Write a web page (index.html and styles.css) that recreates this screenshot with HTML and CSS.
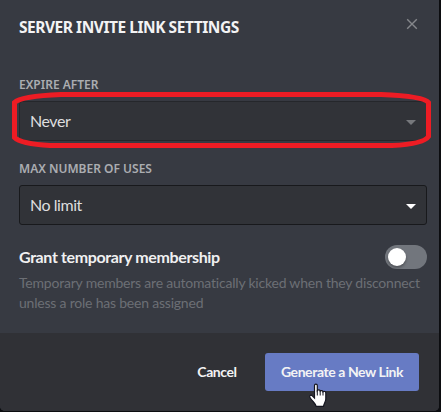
FILE: index.html
```html
<!DOCTYPE html>
<html lang="en">
<head>
    <meta charset="UTF-8">
    <meta name="viewport" content="width=device-width, initial-scale=1.0">
    <title>Server Invite Link Settings</title>
    <link rel="stylesheet" href="styles.css">
</head>
<body>
    <div class="modal">
        <div class="modal-header">
            <h2>Server Invite Link Settings</h2>
            <button class="close" type="button" aria-label="Close">
                <svg width="12" height="12" viewBox="0 0 12 12"><path d="M1.2 1.2 10.8 10.8M10.8 1.2 1.2 10.8"/></svg>
            </button>
        </div>

        <div class="modal-body">
            <div class="field">
                <h5>Expire After</h5>
                <div class="select focused">
                    <span>Never</span>
                    <svg class="arrow" width="10" height="5" viewBox="0 0 10 5"><path d="M0 0h10L5 5z"/></svg>

                    <!-- red marker around the field -->
                    <svg class="marker" width="421" height="58" viewBox="0 0 421 58">
                        <path d="M50 3.5H370C394 4.5 414 7 417.500 11.500V45.500C414 51 402 53.500 381 54.500H39C22 53.500 8 51 3.500 46.500V11.500C8 7 26 4.500 50 3.500Z"/>
                    </svg>
                </div>
            </div>

            <div class="field">
                <h5>Max Number of Uses</h5>
                <div class="select">
                    <span>No limit</span>
                    <svg class="arrow" width="10" height="5" viewBox="0 0 10 5"><path d="M0 0h10L5 5z"/></svg>
                </div>
            </div>

            <div class="switch-row">
                <h3>Grant temporary membership</h3>
                <div class="switch"></div>
            </div>
            <p class="note">Temporary members are automatically kicked when they disconnect<br>unless a role has been assigned</p>
        </div>

        <div class="modal-footer">
            <button class="cancel" type="button">Cancel</button>
            <button class="generate" type="button">Generate a New Link</button>
        </div>
    </div>

    <!-- hand pointer over the button -->
    <svg class="pointer" width="20" height="25" viewBox="0 0 20 25">
        <path d="M6.500 2.500C6.500 .7 9.300 .7 9.300 2.500V7.500C10 6.400 12 6.700 12.200 8C13 7.200 14.800 7.500 15 8.800C16 8 17.800 8.500 17.800 10V16C17.800 19 16 20 15.500 23.300H8.200C7.500 20.500 4.500 18.500 2 14.500C.8 12.500 3 11.500 4.300 12.800L6.500 15Z"/>
        <path class="fingers" d="M9.300 7v5.500M12.200 8v4.500M15 8.800v3.700"/>
    </svg>
</body>
</html>
```

FILE: styles.css
```css
* {
    box-sizing: border-box;
}

body {
    margin: 0;
    height: 412px;
    overflow: hidden;
    background-color: #0c0d10;
    font-family: Lato, 'Noto Sans', sans-serif;
}

h2, h3, h5, p {
    margin: 0;
}

button {
    border: none;
    padding: 0;
    background: none;
    font-family: inherit;
    cursor: pointer;
}

.modal {
    display: flex;
    flex-direction: column;
    width: 439px;
    height: 411px;
    border-radius: 0 0 5px 5px;
    overflow: hidden;
    background-color: #373a42;
}

.modal-header {
    display: flex;
    justify-content: space-between;
    align-items: flex-start;
    height: 75px;
    padding: 17px 21px 0 19px;
}

.modal-header h2 {
    color: #f3f3f4;
    font-family: 'Noto Sans', sans-serif;
    font-size: 15.5px;
    line-height: 20px;
    font-weight: 700;
    letter-spacing: -0.46px;
    text-transform: uppercase;
    white-space: nowrap;
}

.close {
    display: flex;
    margin-top: 1px;
}

.close svg {
    stroke: #85878b;
    stroke-width: 1.4;
    fill: none;
}

.modal-body {
    height: 258px;
    padding: 2px 12px 0 19px;
}

.field {
    width: 408px;
    height: 84px;
}

.field h5 {
    height: 24px;
    color: #abadb1;
    font-family: 'Noto Sans', sans-serif;
    font-size: 12px;
    line-height: 16px;
    font-weight: 600;
    text-transform: uppercase;
    white-space: nowrap;
}

.select {
    position: relative;
    display: flex;
    justify-content: space-between;
    align-items: center;
    height: 40px;
    padding: 0 10px;
    border: 1px solid #18191c;
    border-radius: 3px;
    background-color: #313338;
    color: #dededf;
    font-size: 16px;
    line-height: 20px;
    letter-spacing: -0.45px;
}

.select.focused {
    border-color: #25272b;
}

.arrow {
    fill: #fff;
    margin-top: 2px;
}

.focused .arrow {
    fill: #76787c;
}

.marker {
    position: absolute;
    left: -9px;
    top: -11px;
    fill: none;
    stroke: #ed1c24;
    stroke-width: 5;
}

.switch-row {
    display: flex;
    justify-content: space-between;
    width: 408px;
    height: 28px;
}

.switch-row h3 {
    color: #f0f0f1;
    font-size: 16px;
    line-height: 24px;
    font-weight: 700;
    letter-spacing: -0.37px;
    white-space: nowrap;
}

.switch {
    width: 42px;
    height: 24px;
    padding: 3px;
    border-radius: 12px;
    background-color: #72767d;
}

.switch::before {
    content: "";
    display: block;
    width: 18px;
    height: 18px;
    border-radius: 50%;
    background-color: #fff;
    box-shadow: 0 2px 3px rgba(0, 0, 0, 0.3);
}

.note {
    color: #6c6f75;
    font-size: 14px;
    line-height: 20px;
    letter-spacing: -0.21px;
    white-space: nowrap;
}

.modal-footer {
    display: flex;
    justify-content: flex-end;
    align-items: flex-start;
    height: 78px;
    padding: 20px 20px 0;
    background-color: #303136;
    color: #f3f3f4;
}

.modal-footer button {
    height: 38px;
    padding-bottom: 1px;
    color: #f3f3f4;
    font-size: 14px;
    font-weight: 700;
    letter-spacing: -0.42px;
    white-space: nowrap;
}

.modal-footer .cancel {
    width: 96px;
}

.modal-footer .generate {
    width: 154px;
    border-radius: 3px;
    background-color: #677bc4;
}

.pointer {
    position: absolute;
    left: 308px;
    top: 383px;
    fill: #fff;
    stroke: #14151f;
    stroke-width: 1.2;
}

.pointer .fingers {
    stroke-width: 1;
}
```
